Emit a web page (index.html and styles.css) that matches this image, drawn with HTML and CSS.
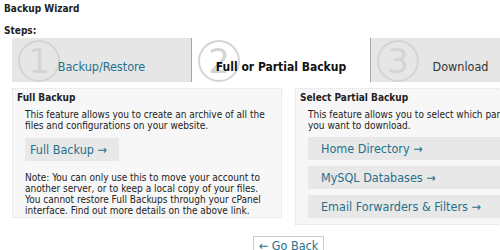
FILE: index.html
```html
<!DOCTYPE html>
<html>
<head>
    <title>Backup Wizard</title>
    <link rel="stylesheet" href="styles.css">
</head>
<body>
    <h1 class="title">Backup Wizard</h1>
    <div class="steps-label">Steps:</div>

    <div class="wizard">
        <div class="steps">
            <div class="step">
                <span class="step-num">1</span>
                <a class="step-link" href="#">Backup/Restore</a>
            </div>
            <div class="step current">
                <span class="step-num">2</span>
                <span class="step-text">Full or Partial Backup</span>
            </div>
            <div class="step next">
                <span class="step-num">3</span>
                <span class="step-text">Download</span>
            </div>
        </div>

        <div class="panels">
            <div class="panel panel-full">
                <div class="panel-title">Full Backup</div>
                <p class="panel-desc">This feature allows you to create an archive of all the files and configurations on your website.</p>
                <a class="action-btn fit" href="#">Full Backup &rarr;</a>
                <p class="panel-note">Note: You can only use this to move your account to another server, or to keep a local copy of your files. You cannot restore Full Backups through your cPanel interface. Find out more details on the above link.</p>
            </div>
            <div class="panel panel-partial">
                <div class="panel-title">Select Partial Backup</div>
                <p class="panel-desc">This feature allows you to select which part of your backup you want to download.</p>
                <a class="action-btn" href="#">Home Directory &rarr;</a>
                <a class="action-btn" href="#">MySQL Databases &rarr;</a>
                <a class="action-btn" href="#">Email Forwarders &amp; Filters &rarr;</a>
            </div>
        </div>

        <div class="back-row">
            <a class="back-btn" href="#">&larr; Go Back</a>
        </div>
    </div>
</body>
</html>
```

FILE: styles.css
```css
html, body {
    overflow: hidden;
}
body {
    font-family: "DejaVu Sans Condensed", "DejaVu Sans", Verdana, sans-serif;
    margin: 0;
    padding: 2px 4px;
    background: white;
    color: #222;
    font-size: 10px;
}
a {
    color: #27708c;
    text-decoration: none;
}
.title, .steps-label, .panel-title, .step.current {
    font-weight: bold;
}
.title {
    font-size: 10px;
    line-height: 14px;
    margin: 0;
}
.steps-label {
    font-size: 10px;
    line-height: 13px;
    margin-top: 8px;
}
.wizard {
    width: 553px;
    margin: 1px 0 0 8px;
}
.steps {
    display: flex;
    height: 44px;
}
.step {
    position: relative;
    width: 180px;
    flex-shrink: 0;
    background: #e6e6e6;
    text-align: center;
    padding-top: 22px;
    box-sizing: border-box;
    font-size: 12.5px;
    line-height: 14px;
}
.step:first-child {
    border-right: 1px solid #a8a8a8;
}
.step.current {
    background: white;
    width: 178px;
    font-size: 12px;
    color: #111;
}
.step.next {
    border-left: 1px solid #a8a8a8;
    color: #333;
}
.step-num {
    position: absolute;
    left: 6px;
    top: 2px;
    width: 38px;
    height: 38px;
    border: 2px solid #d4d4d4;
    border-radius: 50%;
    color: #d4d4d4;
    font-family: "DejaVu Sans", sans-serif;
    font-size: 34px;
    font-weight: normal;
    line-height: 38px;
    text-align: center;
}
.step-link, .step-text {
    position: relative;
}
.panels {
    display: flex;
    gap: 13px;
    margin-top: 6px;
    align-items: flex-start;
}
.panel {
    flex-shrink: 0;
    width: 270px;
    background: #f7f7f7;
    border: 1px dotted #e2e2e2;
    padding: 2px 4px 1px;
    box-sizing: border-box;
}
.panel-partial {
    width: 290px;
    padding-bottom: 6px;
}
.panel-title {
    line-height: 13px;
}
.panel-desc, .panel-note {
    margin: 5px 0 0 8px;
    line-height: 11px;
}
.panel-full .panel-desc, .panel-full .panel-note {
    margin-right: 10px;
}
.action-btn {
    display: block;
    background: #e8e8e8;
    font-size: 12.5px;
    line-height: 13px;
    padding: 5px 13px;
    margin: 6px 0 0 8px;
}
.action-btn.fit {
    width: max-content;
    padding: 5px 12px 5px 5px;
    margin-top: 7px;
}
.panel-note {
    margin-top: 11px;
}
.back-row {
    text-align: center;
    margin-top: 11px;
}
.back-btn {
    display: inline-block;
    border: 1px solid #ccc;
    background: white;
    font-size: 12.5px;
    line-height: 14px;
    padding: 2px 5px;
}
```
